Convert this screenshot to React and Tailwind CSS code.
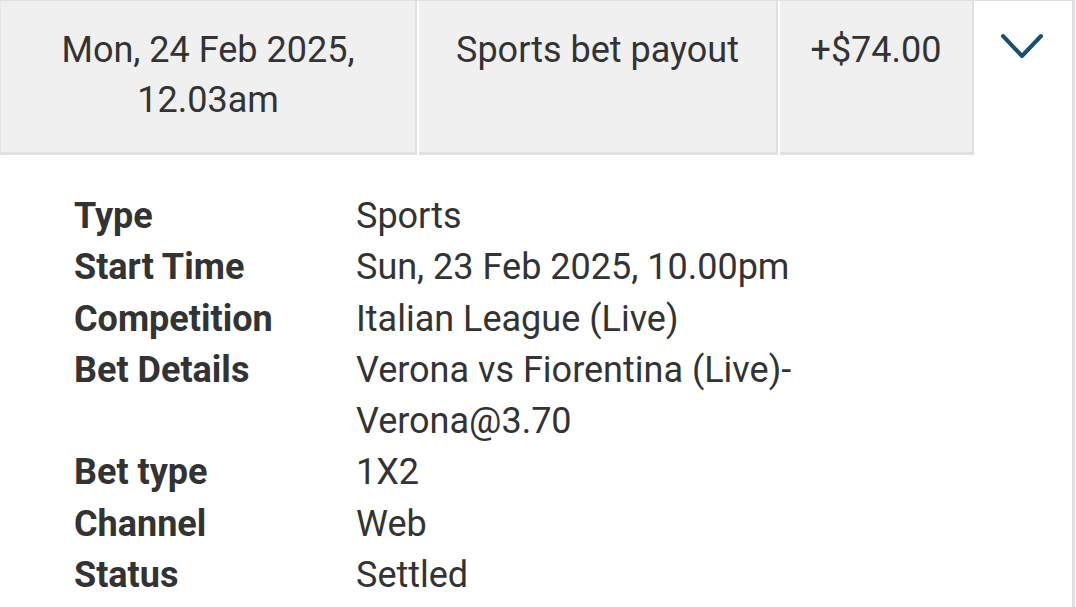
const rows = [
  { label: 'Type', value: ['Sports'] },
  { label: 'Start Time', value: ['Sun, 23 Feb 2025, 10.00pm'] },
  { label: 'Competition', value: ['Italian League (Live)'] },
  { label: 'Bet Details', value: ['Verona vs Fiorentina (Live)-', 'Verona@3.70'] },
  { label: 'Bet type', value: ['1X2'] },
  { label: 'Channel', value: ['Web'] },
  { label: 'Status', value: ['Settled'] },
];

function Chevron() {
  return (
    <svg width="46" height="28" viewBox="0 0 46 28" fill="none">
      <path
        d="M4 4 L23 24 L42 4"
        stroke="#1b4f72"
        strokeWidth="4"
        strokeLinecap="round"
        strokeLinejoin="round"
      />
    </svg>
  );
}

export default function App() {
  return (
    <div
      className="w-[1075px] h-[607px] bg-white border-t border-r-[3px] border-[#e0e0e0] text-[#333333]"
      style={{ fontFamily: 'Roboto, "Liberation Sans", sans-serif' }}
    >
      {/* summary row */}
      <div className="flex gap-[2px] text-[36px] leading-[50px]">
        <div className="w-[417px] h-[154px] bg-[#f0f0f0] border-l border-l-[#e8e8e8] border-r-2 border-b-[3px] border-[#e0e0e0] pt-[24px] text-center">
          Mon, 24 Feb 2025,
          <br />
          12.03am
        </div>
        <div className="w-[359px] h-[154px] bg-[#f0f0f0] border-r-2 border-b-[3px] border-[#e0e0e0] pt-[24px] text-center">
          Sports bet payout
        </div>
        <div className="w-[194px] h-[154px] bg-[#f0f0f0] border-r-2 border-b-[3px] border-[#e0e0e0] pt-[24px] text-center">
          +$74.00
        </div>
        <div className="flex-1 flex justify-center pt-[31px] pr-[4px]">
          <div>
            <Chevron />
          </div>
        </div>
      </div>

      {/* details */}
      <div className="pl-[74px] pt-[36px] text-[36px] leading-[51.3px]">
        {rows.map((r) => (
          <div key={r.label} className="flex">
            <div className="w-[282px] font-bold">{r.label}</div>
            <div>
              {r.value.map((v) => (
                <div key={v}>{v}</div>
              ))}
            </div>
          </div>
        ))}
      </div>
    </div>
  );
}
